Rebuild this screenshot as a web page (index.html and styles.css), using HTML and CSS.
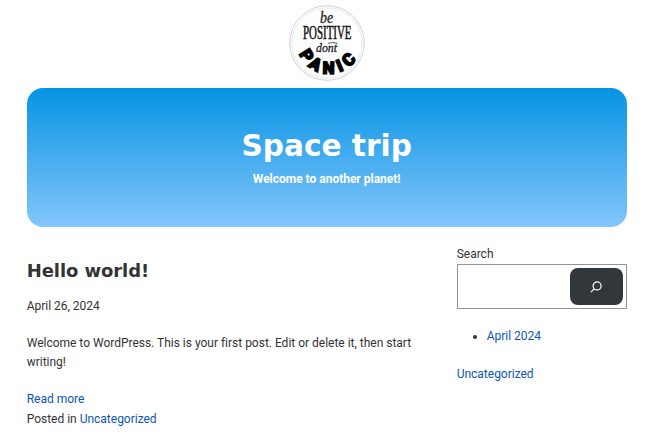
FILE: index.html
```html
<!DOCTYPE html>
<html lang="en">
<head>
<meta charset="utf-8">
<title>Space trip</title>
<link rel="stylesheet" href="styles.css">
</head>
<body>
<div class="page">
  <div class="brand">
    <svg class="logo" viewBox="0 0 76 76" role="img" aria-label="be positive dont panic">
      <defs><path id="arc" d="M10 49A33 33 0 0 0 70 50"/></defs>
      <circle cx="38" cy="38" r="37.3" class="ring"/>
      <circle cx="38" cy="38" r="35" class="ring dashed"/>
      <text class="script" x="31" y="18" font-size="16" textLength="13" lengthAdjust="spacingAndGlyphs">be</text>
      <text class="caps" x="14" y="33.5" font-size="18" textLength="48.5" lengthAdjust="spacingAndGlyphs">POSITIVE</text>
      <text class="script" x="27" y="47" font-size="13" textLength="21" lengthAdjust="spacingAndGlyphs">dont</text>
      <path d="M39 38.3q5-1.5 9.5 0" class="stroke"/>
      <text class="panic"><textPath href="#arc" textLength="70" lengthAdjust="spacing">PANIC</textPath></text>
    </svg>
  </div>
  <header class="hero">
    <h1>Space trip</h1>
    <p>Welcome to another planet!</p>
  </header>
  <div class="columns">
    <main class="post">
      <h2>Hello world!</h2>
      <p class="date">April 26, 2024</p>
      <p class="excerpt">Welcome to WordPress. This is your first post. Edit or delete it, then start writing!</p>
      <div class="meta">
        <div><a href="#">Read more</a></div>
        <div>Posted in <a href="#">Uncategorized</a></div>
      </div>
    </main>
    <aside class="sidebar">
      <label for="search">Search</label>
      <div class="search">
        <input id="search" type="text">
        <button type="button" aria-label="Search">
          <svg viewBox="0 0 12 12"><circle cx="7.1" cy="4.9" r="4"/><path d="M4.2 7.8.9 11.1"/></svg>
        </button>
      </div>
      <ul><li><a href="#">April 2024</a></li></ul>
      <a href="#">Uncategorized</a>
    </aside>
  </div>
</div>
</body>
</html>
```
FILE: styles.css
```css
* { box-sizing: border-box; }
body {
  margin: 0;
  background: #fff;
  color: #333;
  font: 12px/19.5px Roboto, sans-serif;
  letter-spacing: -.01px;
  overflow: hidden;
}
h1, h2, p { margin: 0; }
a { color: #0a56b4; text-decoration: none; }
.page { width: 600px; margin-left: 26.7px; }
.brand { display: flex; justify-content: center; height: 88px; padding-top: 5px; }
.logo { width: 76px; height: 76px; }
.ring { fill: none; stroke: #bbb; stroke-width: .7; }
.dashed { stroke: #ccc; stroke-dasharray: 2 1; }
.script { font-family: "Liberation Serif", serif; font-style: italic; fill: #222; stroke: #222; stroke-width: .3; }
.caps { font-family: "Liberation Serif", serif; fill: #111; stroke: #111; stroke-width: .5; }
.panic { font: 900 17px Roboto, sans-serif; fill: #000; stroke: #000; stroke-width: 1.5; }
.stroke { fill: none; stroke: #222; stroke-width: .8; }
.hero {
  height: 139px;
  padding-top: 37px;
  border-radius: 16px;
  background: linear-gradient(#0693e3, #84c6fb);
  color: #fff;
  text-align: center;
}
.hero h1 { font: bold 29.6px/42px "DejaVu Sans", sans-serif; }
.hero p { font-weight: bold; line-height: 20px; margin-top: 2px; }
.columns { display: grid; grid-template-columns: 400px 170px; column-gap: 30px; }
.post { padding-top: 31px; }
.post h2 { font: bold 18px/26px "DejaVu Sans", sans-serif; letter-spacing: -.08px; }
.date { margin-top: 13px; }
.excerpt { margin-top: 17px; }
.meta { margin-top: 16px; line-height: 20px; }
.sidebar { padding-top: 17px; }
.sidebar label { display: block; height: 20px; line-height: 21px; }
.search { display: flex; height: 45px; padding: 3px; border: 1px solid #949494; }
.search input { flex: 1; min-width: 0; border: 0; padding: 0; }
.search button {
  display: flex;
  align-items: center;
  justify-content: center;
  width: 53px;
  padding: 0;
  border: 0;
  border-radius: 8px;
  background: #32373c;
}
.search svg { width: 12px; height: 12px; margin: 1px 1px 0 0; fill: none; stroke: #fff; stroke-width: 1.2; }
.sidebar ul { margin: 18px 0; padding-left: 30px; }
```
